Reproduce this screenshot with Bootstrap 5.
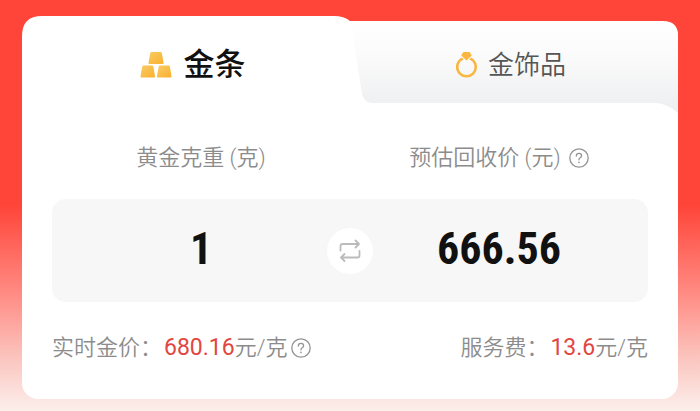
<!DOCTYPE html>
<html lang="zh-CN">
<head>
<meta charset="utf-8">
<meta name="viewport" content="width=device-width, initial-scale=1">
<title>黄金回收估价</title>
<link href="https://cdn.jsdelivr.net/npm/bootstrap@5.3.0/dist/css/bootstrap.min.css" rel="stylesheet">
<style>
  body {
    min-height: 100vh;
    padding: 16px 22px 12px;
    font-family: Roboto, "Noto Sans CJK SC", sans-serif;
    font-size: 22px;
    font-weight: 350;
    line-height: 32px;
    color: #8c8c8c;
    background: linear-gradient(#ff4539 50%, #ff8a82 71%, #fbc4be 87%, #fcefec 100%) no-repeat;
  }
  .panel { border-radius: 18px; }
  .panel-body { background: #fff; border-radius: 0 0 16px 16px; padding: 29px 30px 35px; }
  .tab-strip { height: 97px; }
  .tab-shape { z-index: 0; }
  .tab-btn { z-index: 1; border: 0; background: none; padding: 0; gap: 12px; }
  .tab-main { width: 52%; font-size: 31px; font-weight: 500; color: #111; }
  .tab-side { width: 48%; font-size: 26px; font-weight: 350; color: #555; padding-right: 20px; gap: 10px; }
  .amounts { background: #f7f7f7; border-radius: 14px; height: 103px; margin: 25px 0 30px; }
  .amount {
    border: 0; background: none; min-width: 0; padding: 0 0 4px; color: #111;
    font-family: "Roboto Condensed", Roboto, sans-serif;
    font-size: 44px; line-height: 56px; font-weight: 700;
  }
  .swap { width: 46px; height: 46px; border: 0; background: #fff; color: #bbb; }
  .help { border: 0; background: none; padding: 0; color: #949494; }
  .price { color: #e1473f; font-size: 23px; font-weight: 400; margin-left: 2px; }
</style>
</head>
<body>
<main class="panel">
  <div class="tab-strip position-relative d-flex" role="tablist">
    <svg class="tab-shape position-absolute top-0 start-0 w-100 h-100" viewBox="0 0 656 97" preserveAspectRatio="none" aria-hidden="true">
      <defs>
        <linearGradient id="sideFill" x1="0" y1="0" x2="0" y2="1">
          <stop offset="0" stop-color="#fff"/><stop offset=".35" stop-color="#fbfbfb"/><stop offset="1" stop-color="#edeef0"/>
        </linearGradient>
      </defs>
      <path fill="#fff" d="M0 97V20Q0 0 20 0H312Q322 0 328 5H641Q656 5 656 20V97Z"/>
      <path fill="url(#sideFill)" d="M327 6H641Q656 6 656 20V97Q644 87 634 87H352Q342 87 340 78L331 20Z"/>
    </svg>
    <button type="button" class="tab-btn tab-main position-relative d-flex align-items-center justify-content-center" role="tab" aria-selected="true">
      <svg width="32" height="26" viewBox="0 0 32 26" aria-hidden="true">
        <defs><linearGradient id="gold" x1="0" y1="0" x2="1" y2="1"><stop offset="0" stop-color="#f8cb66"/><stop offset="1" stop-color="#fbb02d"/></linearGradient></defs>
        <g fill="url(#gold)">
          <path d="M11.500 0H20.500Q21.500 0 21.800 1L23.500 10.500Q23.700 12 22.500 12H9.500Q8.300 12 8.500 10.500L10.300 1Q10.500 0 11.500 0Z"/>
          <path d="M3.500 13.500H12Q13 13.500 13.300 14.500L15 24Q15.200 25.500 14 25.500H1.500Q.3 25.500 .5 24L2.300 14.500Q2.500 13.500 3.500 13.500Z"/>
          <path d="M20 13.500H28.500Q29.500 13.500 29.800 14.500L31.500 24Q31.700 25.500 30.500 25.500H18Q16.800 25.500 17 24L18.800 14.500Q19 13.500 20 13.500Z"/>
        </g>
      </svg>
      <span>金条</span>
    </button>
    <button type="button" class="tab-btn tab-side position-relative d-flex align-items-center justify-content-center" role="tab" aria-selected="false">
      <svg width="23" height="26" viewBox="0 0 23 26" aria-hidden="true">
        <circle cx="11.500" cy="15" r="9.300" fill="none" stroke="#f9b640" stroke-width="2.600"/>
        <path d="M8.500 0H14.500Q16 1.500 16.800 3.500L11.500 8.500 6.200 3.500Q7 1.500 8.500 0Z" fill="#f9b640" stroke="#fbfbfb" stroke-width="2" stroke-linejoin="round" paint-order="stroke"/>
      </svg>
      <span>金饰品</span>
    </button>
  </div>

  <div class="panel-body">
    <div class="row g-0 text-center">
      <label class="col-6" for="weight">黄金克重 (克)</label>
      <div class="col-6 d-flex justify-content-center align-items-center gap-2">
        <label for="estimate">预估回收价 (元)</label>
        <button type="button" class="help d-flex" aria-label="估价说明">
          <svg width="20" height="20" viewBox="0 0 20 20" fill="none" stroke="currentColor" stroke-width="1.300" stroke-linecap="round" aria-hidden="true"><circle cx="10" cy="10" r="9.200"/><path d="M7.300 8Q7.300 5.300 10 5.300 12.600 5.300 12.600 7.700 12.600 9 11.200 9.800 10 10.500 10 11.800"/><path d="M10 14.300v.3" stroke-width="1.600"/></svg>
        </button>
      </div>
    </div>

    <div class="amounts d-flex align-items-center position-relative">
      <input id="weight" class="amount w-50 text-center" type="text" inputmode="decimal" value="1">
      <input id="estimate" class="amount w-50 text-center" type="text" value="666.56" readonly>
      <button type="button" class="swap rounded-circle position-absolute top-50 start-50 translate-middle d-flex align-items-center justify-content-center p-0" aria-label="互换">
        <svg width="22" height="24" viewBox="0 0 22 24" fill="none" stroke="currentColor" stroke-width="1.800" stroke-linecap="round" stroke-linejoin="round" aria-hidden="true"><path d="M1.500 11.500V7Q1.500 5 3.500 5H20M16.500 1.500 20 5 16.500 8.500M20.500 12V16.500Q20.500 18.500 18.500 18.500H2M5.500 15 2 18.500 5.500 22"/></svg>
      </button>
    </div>

    <div class="d-flex justify-content-between align-items-center">
      <div class="d-flex align-items-center gap-1">
        <span>实时金价：<span class="price">680.16</span>元/克</span>
        <button type="button" class="help d-flex" aria-label="金价说明">
          <svg width="20" height="20" viewBox="0 0 20 20" fill="none" stroke="currentColor" stroke-width="1.300" stroke-linecap="round" aria-hidden="true"><circle cx="10" cy="10" r="9.200"/><path d="M7.300 8Q7.300 5.300 10 5.300 12.600 5.300 12.600 7.700 12.600 9 11.200 9.800 10 10.500 10 11.800"/><path d="M10 14.300v.3" stroke-width="1.600"/></svg>
        </button>
      </div>
      <span>服务费：<span class="price">13.6</span>元/克</span>
    </div>
  </div>
</main>
<script src="https://cdn.jsdelivr.net/npm/bootstrap@5.3.0/dist/js/bootstrap.bundle.min.js"></script>
</body>
</html>
